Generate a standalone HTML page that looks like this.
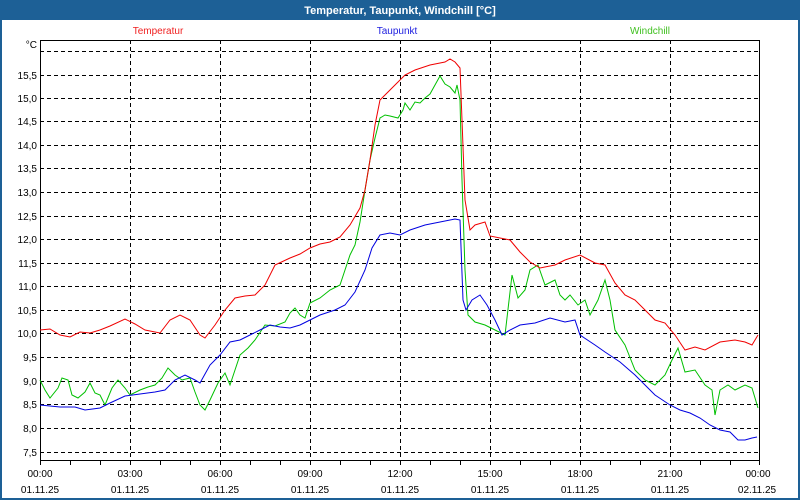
<!DOCTYPE html>
<html><head><meta charset="utf-8"><style>
html,body{margin:0;padding:0;width:800px;height:500px;overflow:hidden;background:#fff;font-family:"Liberation Sans",sans-serif}
</style></head><body>
<svg width="800" height="500" xmlns="http://www.w3.org/2000/svg" font-family="Liberation Sans, sans-serif" font-size="10">
<rect x="0" y="0" width="800" height="500" fill="#1d6096"/>
<rect x="2" y="20" width="796" height="478" fill="#fff"/>
<text x="400" y="14" fill="#fff" font-weight="bold" font-size="11" text-anchor="middle">Temperatur, Taupunkt, Windchill [°C]</text>
<text x="158" y="34" fill="#f02020" text-anchor="middle">Temperatur</text>
<text x="397" y="34" fill="#2020e0" text-anchor="middle">Taupunkt</text>
<text x="650" y="34" fill="#40c020" text-anchor="middle">Windchill</text>
<g stroke="#000" stroke-dasharray="4,3" stroke-width="1">
<path d="M40 51.5H760M40 75.5H760M40 98.5H760M40 121.5H760M40 145.5H760M40 168.5H760M40 192.5H760M40 216.5H760M40 239.5H760M40 263.5H760M40 286.5H760M40 310.5H760M40 333.5H760M40 357.5H760M40 381.5H760M40 404.5H760M40 428.5H760M40 452.5H760"/>
<path d="M130.5 40V461M220.5 40V461M310.5 40V461M400.5 40V461M490.5 40V461M580.5 40V461M670.5 40V461"/>
</g>
<rect x="40.5" y="40.5" width="719" height="420" fill="none" stroke="#000"/>
<g stroke="#000"><path d="M70.5 461v4M100.5 461v4M130.5 461v4M160.5 461v4M190.5 461v4M220.5 461v4M250.5 461v4M280.5 461v4M310.5 461v4M340.5 461v4M370.5 461v4M400.5 461v4M430.5 461v4M460.5 461v4M490.5 461v4M520.5 461v4M550.5 461v4M580.5 461v4M610.5 461v4M640.5 461v4M670.5 461v4M700.5 461v4M730.5 461v4M40.5 461v4M759.5 461v4"/></g>
<g text-anchor="end" fill="#000">
<text x="37" y="48">°C</text>
<text x="37" y="79">15,5</text><text x="37" y="102">15,0</text><text x="37" y="125">14,5</text><text x="37" y="149">14,0</text><text x="37" y="172">13,5</text><text x="37" y="196">13,0</text><text x="37" y="220">12,5</text><text x="37" y="243">12,0</text><text x="37" y="267">11,5</text><text x="37" y="290">11,0</text><text x="37" y="314">10,5</text><text x="37" y="337">10,0</text><text x="37" y="361">9,5</text><text x="37" y="385">9,0</text><text x="37" y="408">8,5</text><text x="37" y="432">8,0</text><text x="37" y="456">7,5</text>
</g>
<g text-anchor="middle" fill="#000">
<text x="40" y="477">00:00</text><text x="130" y="477">03:00</text><text x="220" y="477">06:00</text><text x="310" y="477">09:00</text><text x="400" y="477">12:00</text><text x="490" y="477">15:00</text><text x="580" y="477">18:00</text><text x="670" y="477">21:00</text><text x="758" y="477">00:00</text>
<text x="40" y="493">01.11.25</text><text x="130" y="493">01.11.25</text><text x="220" y="493">01.11.25</text><text x="310" y="493">01.11.25</text><text x="400" y="493">01.11.25</text><text x="490" y="493">01.11.25</text><text x="580" y="493">01.11.25</text><text x="670" y="493">01.11.25</text><text x="757" y="493">02.11.25</text>
</g>
<g fill="none" stroke-width="1">
<polyline stroke="#00c000" points="40,380 45,390 50,398 58,388 62,378 68,380 72,395 78,398 85,392 90,383 95,393 100,395 105,405 112,388 118,380 125,388 130,395 140,390 148,387 155,385 162,378 168,368 175,375 182,380 190,378 195,392 200,405 205,410 210,400 218,383 225,373 230,385 235,370 240,355 248,348 255,340 265,325 275,326 285,322 290,313 295,308 300,315 305,318 310,303 320,298 330,290 340,285 345,270 350,255 355,245 360,222 365,190 370,160 375,138 380,118 385,115 390,116 398,118 403,110 405,103 410,110 415,102 420,103 425,98 430,94 435,85 440,76 445,84 450,87 455,93 457,85 460,100 462,180 465,270 468,315 475,322 485,325 495,330 505,335 512,275 518,298 525,290 530,270 538,265 545,285 555,280 560,295 565,300 570,295 578,305 585,300 590,315 598,300 605,280 610,300 615,330 625,345 635,370 645,380 655,385 665,375 672,360 678,348 685,372 695,370 705,385 712,390 715,415 720,390 728,385 735,390 745,385 752,388 758,408"/>
<polyline stroke="#0000e0" points="40,405 60,407 75,407 85,410 100,408 110,403 125,396 140,394 155,392 165,390 175,380 185,375 195,380 200,383 210,365 220,355 230,342 240,340 250,335 260,330 270,325 280,327 290,328 300,325 310,320 320,315 335,310 345,305 355,292 365,270 372,248 380,235 390,233 400,235 410,230 425,225 440,222 455,219 460,220 463,300 466,310 472,300 480,295 487,305 495,320 502,335 510,330 520,325 535,323 550,318 565,322 575,320 580,335 595,345 605,352 620,362 635,375 645,385 655,395 670,405 680,410 690,413 700,418 710,425 720,430 730,432 738,440 745,440 752,438 757,437"/>
<polyline stroke="#f00000" points="40,330 50,329 60,335 70,337 80,332 90,333 100,330 110,326 125,319 135,324 145,330 160,333 170,320 180,315 190,320 200,335 205,338 215,325 225,310 235,298 245,296 255,295 265,285 275,265 290,258 300,254 310,248 320,244 330,242 340,237 350,225 360,208 365,190 370,160 375,125 380,100 385,95 395,85 405,75 415,70 430,65 445,62 450,59 455,62 460,68 462,120 465,200 470,230 475,225 485,222 490,236 500,238 510,240 520,252 530,262 540,268 555,265 565,260 580,255 595,263 605,265 615,283 625,295 635,300 645,310 655,320 665,323 675,335 685,350 695,347 705,350 720,342 735,340 745,342 752,345 758,335"/>
</g>
</svg>
</body></html>
